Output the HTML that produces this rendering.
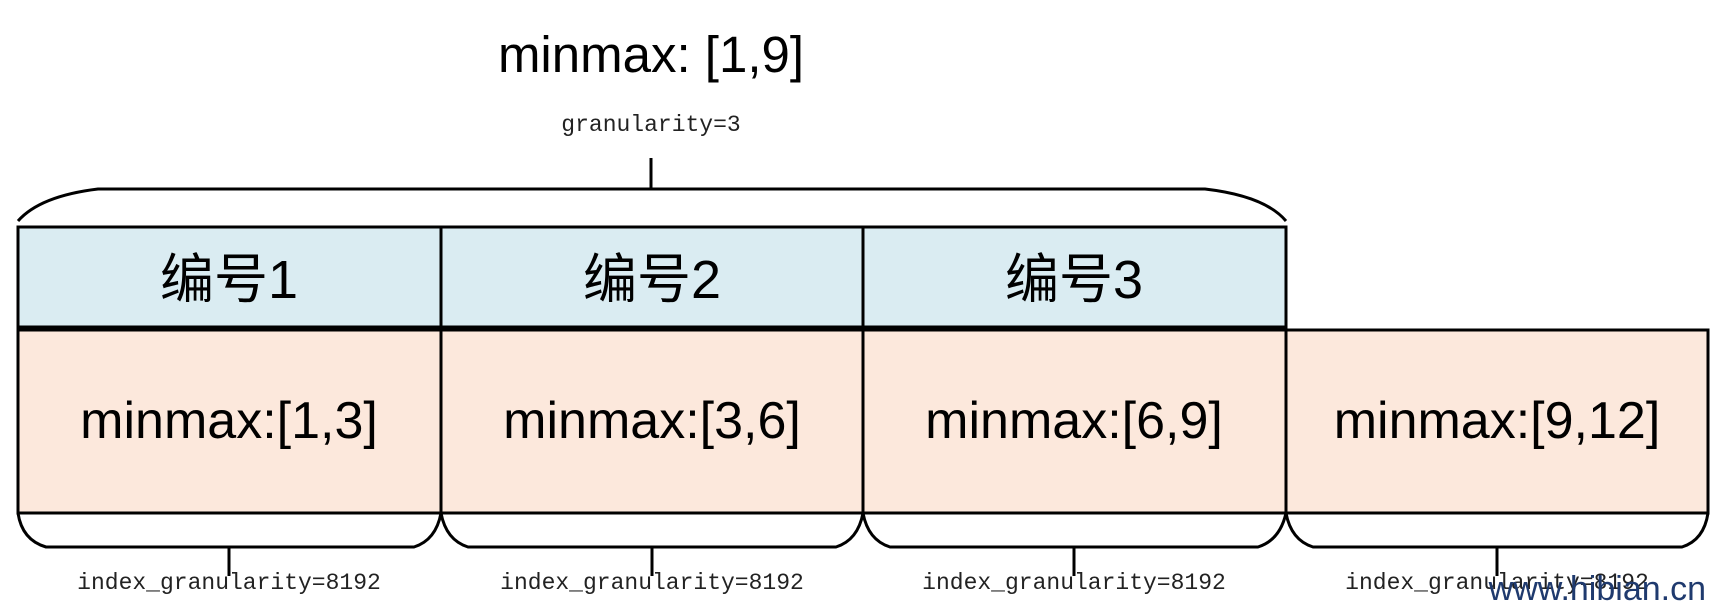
<!DOCTYPE html>
<html><head><meta charset="utf-8"><style>
html,body{margin:0;padding:0;background:#fff;}
svg{display:block;}
.t{font-family:"Liberation Sans","Noto Sans CJK SC",sans-serif;fill:#000;}
.m{font-family:"Liberation Mono","DejaVu Sans Mono",monospace;fill:#222;}
</style></head><body>
<svg width="1720" height="614" viewBox="0 0 1720 614" xmlns="http://www.w3.org/2000/svg">
<text class="t" x="651" y="72" font-size="51" text-anchor="middle">minmax: [1,9]</text>
<text class="m" x="651" y="131" font-size="23" text-anchor="middle">granularity=3</text>
<line x1="651" y1="158" x2="651" y2="189" stroke="#000" stroke-width="3"/>
<path d="M18 221 Q40 196 98 189 L1205 189 Q1265 196 1286 221" fill="none" stroke="#000" stroke-width="3"/>
<g stroke="#000" stroke-width="3">
<rect x="18" y="227" width="423" height="100" fill="#daecf2"/>
<rect x="441" y="227" width="422" height="100" fill="#daecf2"/>
<rect x="863" y="227" width="423" height="100" fill="#daecf2"/>
<rect x="18" y="330" width="423" height="183" fill="#fce8dc"/>
<rect x="441" y="330" width="422" height="183" fill="#fce8dc"/>
<rect x="863" y="330" width="423" height="183" fill="#fce8dc"/>
<rect x="1286" y="330" width="422" height="183" fill="#fce8dc"/>
</g>
<g fill="none" stroke="#000" stroke-width="3">
<path d="M18 513 Q22 540 46 547 L414 547 Q436 540 441 513 Q446 540 468 547 L836 547 Q858 540 863 513 Q868 540 890 547 L1258 547 Q1280 540 1286 513 Q1291 540 1313 547 L1682 547 Q1704 540 1708 513"/>
<line x1="229" y1="547" x2="229" y2="576"/>
<line x1="652" y1="547" x2="652" y2="576"/>
<line x1="1074" y1="547" x2="1074" y2="576"/>
<line x1="1497" y1="547" x2="1497" y2="576"/>
</g>
<g class="t" font-size="54" text-anchor="middle">
<text x="229" y="298">编号1</text>
<text x="652" y="298">编号2</text>
<text x="1074" y="298">编号3</text>
</g>
<g class="t" font-size="52" text-anchor="middle">
<text x="229" y="438">minmax:[1,3]</text>
<text x="652" y="438">minmax:[3,6]</text>
<text x="1074" y="438">minmax:[6,9]</text>
<text x="1497" y="438">minmax:[9,12]</text>
</g>
<g class="m" font-size="23" text-anchor="middle">
<text x="229" y="589">index_granularity=8192</text>
<text x="652" y="589">index_granularity=8192</text>
<text x="1074" y="589">index_granularity=8192</text>
<text x="1497" y="589">index_granularity=8192</text>
</g>
<text x="1706" y="600" font-family="Liberation Sans,sans-serif" font-size="34" fill="#1f3a6e" text-anchor="end">www.hibian.cn</text>
</svg>
</body></html>
